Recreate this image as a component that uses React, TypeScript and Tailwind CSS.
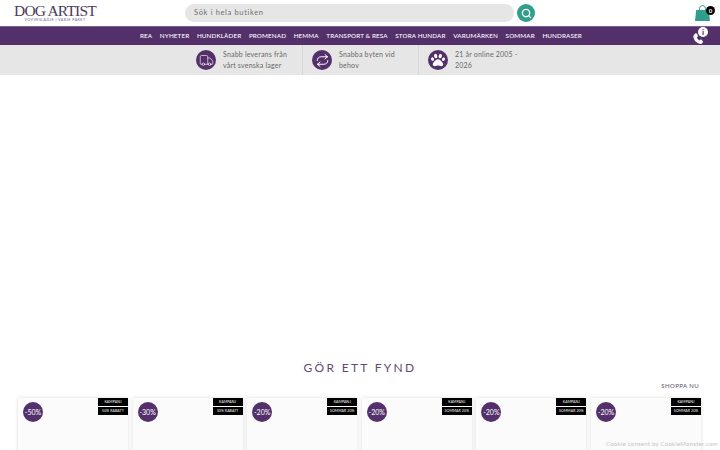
import React from 'react';
import { Search, Truck } from 'lucide-react';
import { FaPaw } from 'react-icons/fa';

const navItems = ['REA', 'NYHETER', 'HUNDKLÄDER', 'PROMENAD', 'HEMMA', 'TRANSPORT & RESA', 'STORA HUNDAR', 'VARUMÄRKEN', 'SOMMAR', 'HUNDRASER'];

const SwapIcon = () => (
  <svg width="15" height="15" viewBox="0 0 24 24" fill="none" stroke="currentColor" strokeWidth="1.6" strokeLinecap="round" strokeLinejoin="round">
    <path d="M16 2.5l4 3.5-4 3.5" />
    <path d="M20 6H10C6 6 3.5 8.5 3.5 12" />
    <path d="M8 21.5l-4-3.5 4-3.5" />
    <path d="M4 18h10c4 0 6.5-2.5 6.5-6" />
  </svg>
);

const perks = [
  { icon: <Truck size={15} strokeWidth={1} />, lines: ['Snabb leverans från', 'vårt svenska lager'] },
  { icon: <SwapIcon />, lines: ['Snabba byten vid', 'behov'] },
  { icon: <FaPaw size={14} />, lines: ['21 år online 2005 -', '2026'] },
];

const products = [
  { off: '-50%', tag: '50% RABATT' },
  { off: '-30%', tag: '30% RABATT' },
  { off: '-20%', tag: 'SOMMAR 20%' },
  { off: '-20%', tag: 'SOMMAR 20%' },
  { off: '-20%', tag: 'SOMMAR 20%' },
  { off: '-20%', tag: 'SOMMAR 20%' },
];

const App: React.FC = () => {
  return (
    <div className="relative h-[450px] w-[720px] overflow-hidden bg-white font-['Lato',sans-serif]">
      <header className="relative flex h-[26px] items-center">
        <div className="ml-[14px] flex w-[82px] flex-col items-center">
          <div className="whitespace-nowrap font-['Liberation_Serif',serif] text-[15.5px] leading-[14px] tracking-[-0.8px] text-[#4b3a57]">DOG ARTIST</div>
          <div className="whitespace-nowrap text-[3.6px] leading-[4px] tracking-[0.45px] text-[#6b5b76]">VOVVESLADJE I VARJE PAKET</div>
        </div>
        <div className="ml-[89px] flex h-[18px] w-[329px] items-center rounded-full bg-[#e6e6e6] pl-[9px] text-[7.5px] tracking-[0.65px] text-[#6f6f6f]">
          Sök i hela butiken
        </div>
        <button className="ml-[3px] flex h-[18px] w-[18px] items-center justify-center rounded-full bg-[#2f9e8b] text-white">
          <Search size={11} strokeWidth={3} />
        </button>
        <div className="absolute left-[695px] top-[5px] h-[17px] w-[21px] text-[#2f9e8b]">
          <svg width="15" height="16" viewBox="0 0 15 16" fill="none">
            <path d="M4.5 6V3.500a3 3 0 0 1 6 0V6" stroke="currentColor" strokeWidth="1" />
            <path d="M1.200 5h12.600L15 16H0z" fill="currentColor" />
          </svg>
          <span className="absolute left-[11px] top-[0.5px] flex h-[9px] w-[9px] items-center justify-center rounded-full bg-black text-[6px] font-bold text-white">0</span>
        </div>
      </header>

      <nav className="relative flex h-[19px] items-center border-t border-[#7d5f90] bg-[#54306b] pl-[140px]">
        <div className="flex gap-[7.6px] whitespace-nowrap text-[6.3px] font-medium tracking-[0.12px] text-white">
          {navItems.map((item) => (
            <span key={item}>{item}</span>
          ))}
        </div>
        <div className="absolute left-[692px] top-[1px] text-white">
          <svg width="13" height="15" viewBox="0 0 24 24" fill="currentColor" className="mt-[3px]">
            <path d="M6.600 2.500c1-.6 1.800-.3 2.400.7l1.800 3.200c.5 1 .3 1.700-.5 2.300l-1.500 1.100c.9 2.200 2.600 4.400 4.800 5.700l1.500-1.200c.8-.6 1.600-.6 2.300.2l2.500 2.700c.7.8.7 1.600-.1 2.300l-1.600 1.500c-1.200 1.100-2.700 1.200-4.200.6C8 20.500 3.200 14.500 2.500 8.800c-.2-1.700.4-3.100 1.800-4.400z" />
          </svg>
          <span className="absolute left-[6px] top-[-1px] flex h-[10px] w-[10px] items-center justify-center rounded-full bg-white text-[8px] font-black text-[#54306b]">i</span>
        </div>
      </nav>

      <section className="flex h-[30px] bg-[#e6e6e6] pl-[187px]">
        {perks.map((perk, i) => (
          <div key={i} className={`flex w-[116px] items-center gap-[7px] pl-[9px] ${i < 2 ? 'border-r border-[#d8d8d8]' : ''}`}>
            <span className="flex h-[20px] w-[20px] shrink-0 items-center justify-center rounded-full bg-[#54306b] text-white">{perk.icon}</span>
            <div className="whitespace-nowrap text-[7px] leading-[11px] tracking-[0.2px] text-[#666]">
              {perk.lines.map((line) => (
                <div key={line}>{line}</div>
              ))}
            </div>
          </div>
        ))}
      </section>

      <div className="h-[284px]" />

      <h2 className="text-center text-[12px] font-normal leading-[18px] tracking-[2.3px] text-[#5f4a70]">GÖR ETT FYND</h2>
      <div className="mt-[4px] pr-[21px] text-right text-[6px] font-medium leading-[9px] tracking-[0.4px] text-[#6b5b76]">SHOPPA NU</div>

      <div className="mt-[8px] flex gap-[4.6px] pl-[18px]">
        {products.map((p, i) => (
          <div key={i} className="relative h-[80px] w-[110px] shrink-0 bg-[#fbfbfb] shadow-[0_0_4px_rgba(0,0,0,0.14)]">
            <span className="absolute left-[5px] top-[4px] flex h-[20px] w-[20px] items-center justify-center rounded-full bg-[#54306b] text-[7px] text-white">{p.off}</span>
            <div className="absolute right-0 top-0 flex w-[30px] flex-col gap-px text-center text-[3.5px] leading-[8px] tracking-[0.1px] text-white">
              <span className="bg-black">KAMPANJ</span>
              <span className="bg-black">{p.tag}</span>
            </div>
          </div>
        ))}
      </div>

      <div className="absolute left-[606px] top-[439px] whitespace-nowrap text-[6px] tracking-[0.25px] text-[#c4c4c4]">Cookie consent by CookieMonster.com</div>
    </div>
  );
};

export default App;
